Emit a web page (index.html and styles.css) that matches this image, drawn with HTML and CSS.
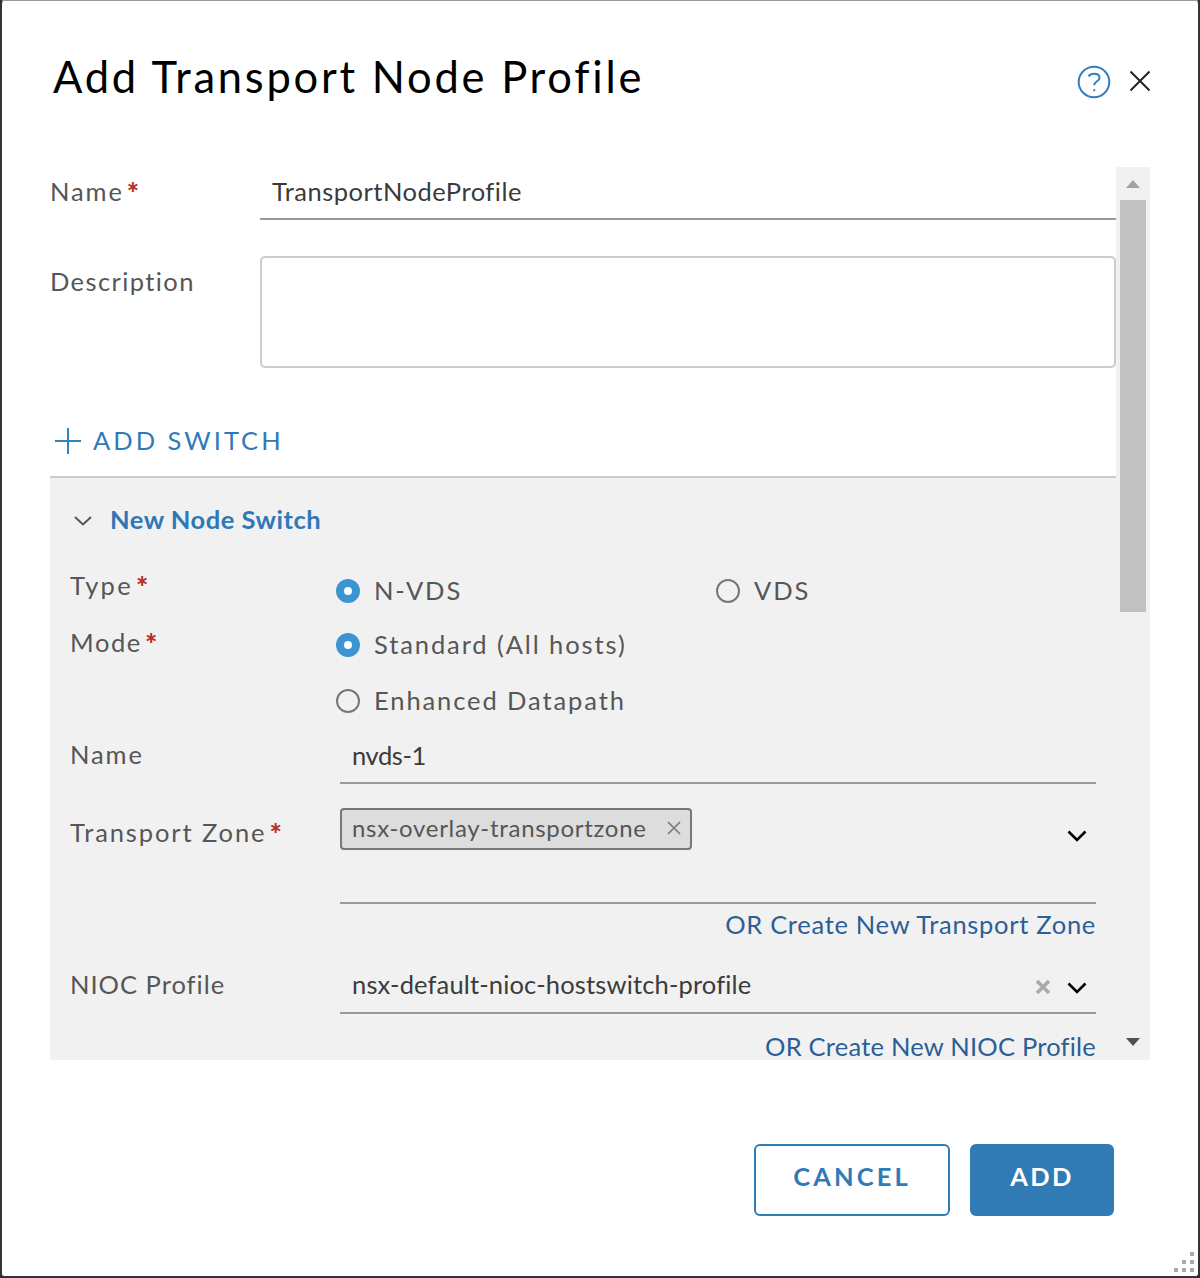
FILE: index.html
```
<!DOCTYPE html>
<html lang="en">
<head>
  <meta charset="UTF-8">
  <title>Add Transport Node Profile</title>
  <link rel="stylesheet" href="styles.css">
</head>
<body>

<div class="modal">
  <div class="modal_header">
    <h1>Add Transport Node Profile</h1>
    <svg class="help_icon" viewBox="0 0 34 34">
      <circle cx="17" cy="17" r="15.3" />
      <path d="M11.500 11.300C13 9.200 15 8.700 17.200 8.700C20.500 8.700 22.500 10.300 22.500 12.900C22.500 16.500 17.200 16 17.200 20.300M17.200 24.300V26.300" />
    </svg>
    <svg class="close_icon" viewBox="0 0 22 22">
      <path d="M1.500 1.500L20.500 20.500M20.500 1.500L1.500 20.500" />
    </svg>
  </div>

  <div class="modal_body">
    <form class="content" id="profile_form">
      <div class="row row_name">
        <label for="name">Name<b>*</b></label>
        <input type="text" id="name" value="TransportNodeProfile" />
      </div>
      <div class="row row_description">
        <label for="description">Description</label>
        <textarea id="description"></textarea>
      </div>

      <div class="add_switch">
        <svg viewBox="0 0 28 28"><path d="M1 14H27M14 1V27" /></svg>
        <span>ADD SWITCH</span>
      </div>

      <div class="panel">
        <div class="panel_title">
          <svg viewBox="0 0 20 12"><path d="M2 2L10 9.500L18 2" /></svg>
          <span>New Node Switch</span>
        </div>

        <div class="row row_type">
          <label class="type_label">Type<b>*</b></label>
          <div class="options">
            <label class="option"><input type="radio" name="type" checked />N-VDS</label>
            <label class="option"><input type="radio" name="type" />VDS</label>
          </div>
        </div>

        <div class="row row_mode">
          <label class="mode_label">Mode<b>*</b></label>
          <div class="options stacked">
            <label class="option"><input type="radio" name="mode" checked />Standard (All hosts)</label>
            <label class="option"><input type="radio" name="mode" />Enhanced Datapath</label>
          </div>
        </div>

        <div class="row row_switch_name">
          <label for="switch_name">Name</label>
          <input type="text" id="switch_name" value="nvds-1" />
        </div>

        <div class="row row_zone">
          <label class="zone_label">Transport Zone<b>*</b></label>
          <div>
            <div class="select zone_select">
              <span class="chip"><span>nsx-overlay-transportzone</span>
                <svg viewBox="0 0 14 14"><path d="M1 1L13 13M13 1L1 13" /></svg>
              </span>
              <svg class="arrow" viewBox="0 0 20 14"><path d="M1.500 2.500L10 11L18.500 2.500" /></svg>
            </div>
            <a class="link link_zone">OR Create New Transport Zone</a>
          </div>
        </div>

        <div class="row row_nioc">
          <label class="nioc_label">NIOC Profile</label>
          <div>
            <div class="select nioc_select">
              <span class="value">nsx-default-nioc-hostswitch-profile</span>
              <svg class="clear" viewBox="0 0 16 16"><path d="M2 2L14 14M14 2L2 14" /></svg>
              <svg class="arrow" viewBox="0 0 20 14"><path d="M1.500 2.500L10 11L18.500 2.500" /></svg>
            </div>
            <a class="link link_nioc">OR Create New NIOC Profile</a>
          </div>
        </div>
      </div>
    </form>

    <div class="scrollbar">
      <svg class="up" viewBox="0 0 14 8"><path d="M0 8L7 0L14 8Z" /></svg>
      <div class="thumb"></div>
      <svg class="down" viewBox="0 0 14 8"><path d="M0 0L7 8L14 0Z" /></svg>
    </div>
  </div>

  <div class="modal_footer">
    <button type="button" class="btn cancel">CANCEL</button>
    <button type="submit" class="btn add" form="profile_form">ADD</button>
  </div>

  <svg class="resize" viewBox="0 0 20 20">
    <path d="M16 0h4v4h-4zM8 8h4v4h-4zM16 8h4v4h-4zM0 16h4v4h-4zM8 16h4v4h-4zM16 16h4v4h-4z" />
  </svg>
</div>

</body>
</html>
```

FILE: styles.css
```
* {
  box-sizing: border-box;
}

body {
  margin: 0;
  background: #2b2b2b;
  font-family: Lato, "Open Sans", sans-serif;
  font-size: 25.5px;
  line-height: 30px;
  letter-spacing: 1.9px;
  font-variant-ligatures: none;
  color: #565656;
}

svg {
  display: block;
  flex: none;
  fill: none;
}

.modal {
  position: relative;
  width: 1200px;
  height: 1278px;
  padding: 0 48px;
  background: #fff;
  border: 2px solid #333;
  border-top: 1px solid #999;
  border-radius: 4px;
  overflow: hidden;
}

/* header */
.modal_header {
  display: flex;
  align-items: center;
  height: 166px;
  padding: 0 0 12px 3px;
}

h1 {
  flex: 1;
  margin: -4px 0 0;
  font-size: 43.5px;
  line-height: 50px;
  font-weight: normal;
  letter-spacing: 2.75px;
  color: #000;
}

.help_icon {
  width: 34px;
  height: 34px;
  margin: 8px 18px 0 0;
  stroke: #2f7fc1;
  stroke-width: 2;
}

.close_icon {
  width: 22px;
  height: 22px;
  margin: 6px -1px 0 0;
  stroke: #222;
  stroke-width: 2;
}

/* scrolling body */
.modal_body {
  display: flex;
  width: 1100px;
  height: 893px;
  overflow: hidden;
}

.content {
  width: 1066px;
  margin: 0;
}

.row {
  display: grid;
  grid-template-columns: 210px 1fr;
  align-items: start;
}

.row b {
  margin-left: 3px;
  color: #b8321f;
  font-size: 29px;
  font-weight: 900;
  line-height: 20px;
  vertical-align: -2px;
}

input[type=text], .select {
  width: 100%;
  padding: 0 12px;
  border: none;
  border-bottom: 2px solid #999;
  background: none;
  color: #3b3b3b;
  font: inherit;
  letter-spacing: 0.15px;
  outline: none;
}

.row_name {
  height: 89px;
}

.row_name label {
  padding-top: 9px;
}

.row_name input {
  height: 53px;
  padding-bottom: 4px;
  letter-spacing: 0.5px;
}

.row_description {
  height: 162px;
}

.row_description label {
  padding-top: 10px;
  letter-spacing: 1.4px;
}

textarea {
  display: block;
  width: 100%;
  height: 112px;
  border: 2px solid #ccc;
  border-radius: 5px;
  resize: none;
}

.add_switch {
  display: flex;
  gap: 11px;
  height: 58px;
  padding: 7px 0 0 4px;
  color: #2f7bb8;
  letter-spacing: 3px;
}

.add_switch svg {
  width: 28px;
  height: 28px;
  margin-top: 2px;
  stroke: #2f85bd;
  stroke-width: 2;
}

/* switch panel */
.panel {
  height: 600px;
  padding: 0 20px;
  background: #f1f1f1;
  border-top: 2px solid #ccc;
}

.panel .row {
  grid-template-columns: 270px 1fr;
}

.panel_title {
  display: flex;
  gap: 17px;
  height: 92px;
  padding: 26px 0 0 3px;
  font-weight: bold;
  letter-spacing: 0.5px;
  color: #2f78b7;
}

.panel_title svg {
  width: 20px;
  height: 12px;
  margin-top: 11px;
  stroke: #555;
  stroke-width: 2;
}

.options {
  display: flex;
  margin-left: -4px;
}

.option {
  display: flex;
  align-items: center;
  width: 380px;
  height: 30px;
}

input[type=radio] {
  appearance: none;
  flex: none;
  width: 24px;
  height: 24px;
  margin: 1px 14px 0 0;
  border: 2px solid #777;
  border-radius: 50%;
}

input[type=radio]:checked {
  border: 8px solid #3d94d3;
  background: #fff;
}

.stacked {
  flex-direction: column;
  gap: 26px;
}

.row_type {
  height: 57px;
}

.type_label {
  letter-spacing: 2.3px;
}

.mode_label {
  letter-spacing: 1.6px;
}

.row_type .options {
  padding-top: 5px;
}

.row_mode {
  height: 112px;
}

.row_mode .options {
  padding-top: 2px;
}

.row_switch_name {
  height: 69px;
}

.row_switch_name input {
  height: 45px;
  padding-bottom: 12px;
  letter-spacing: -0.4px;
}

.row_zone {
  height: 151px;
}

.zone_label {
  padding-top: 9px;
}

.select {
  display: flex;
  align-items: flex-start;
  padding: 0 9px 0 12px;
}

.zone_select {
  height: 96px;
  padding-left: 0;
}

.chip {
  display: flex;
  align-items: center;
  gap: 20px;
  height: 42px;
  padding: 0 9px 3px 10px;
  border: 2px solid #777;
  border-radius: 4px;
  background: #ddd;
  color: #565656;
  font-size: 24px;
  letter-spacing: 0.7px;
}

.chip svg {
  width: 14px;
  height: 14px;
  stroke: #777;
  stroke-width: 1.6;
}

.arrow {
  width: 20px;
  height: 14px;
  margin: 21px 0 0 auto;
  stroke: #000;
  stroke-width: 2.6;
}

.link {
  display: block;
  text-align: right;
  color: #2b5f95;
  letter-spacing: 0.7px;
}

.link_zone {
  padding-top: 5px;
}

.nioc_label, .nioc_select {
  padding-top: 10px;
}

.nioc_label {
  letter-spacing: 1px;
}

.nioc_select {
  height: 55px;
}

.clear {
  width: 16px;
  height: 16px;
  margin: 10px 16px 0 auto;
  stroke: #aaa;
  stroke-width: 3.6;
}

.nioc_select .arrow {
  margin: 12px 0 0;
}

.link_nioc {
  padding-top: 18px;
  line-height: 28px;
  letter-spacing: 0.22px;
}

.scrollbar {
  display: flex;
  flex-direction: column;
  align-items: center;
  width: 34px;
  padding: 13px 0 14px;
  background: #f1f1f1;
}

.scrollbar svg {
  width: 14px;
  height: 8px;
}

.up {
  fill: #a3a3a3;
}

.down {
  margin-top: auto;
  fill: #505050;
}

.thumb {
  width: 26px;
  height: 412px;
  margin-top: 12px;
  background: #c1c1c1;
}

/* footer */
.modal_footer {
  display: flex;
  justify-content: flex-end;
  gap: 20px;
  padding: 84px 36px 0 0;
}

.btn {
  height: 72px;
  padding: 0 0 8px;
  border: 2px solid #2f7bb5;
  border-radius: 6px;
  font: bold 25.5px/30px Lato, "Open Sans", sans-serif;
  letter-spacing: 2.4px;
}

.cancel {
  width: 196px;
  background: #fff;
  color: #2f7bb8;
  letter-spacing: 3.1px;
}

.add {
  width: 144px;
  background: #317bb5;
  color: #fff;
}

.resize {
  position: absolute;
  right: 4px;
  bottom: 4px;
  width: 20px;
  height: 20px;
  fill: #aaa;
}
```
